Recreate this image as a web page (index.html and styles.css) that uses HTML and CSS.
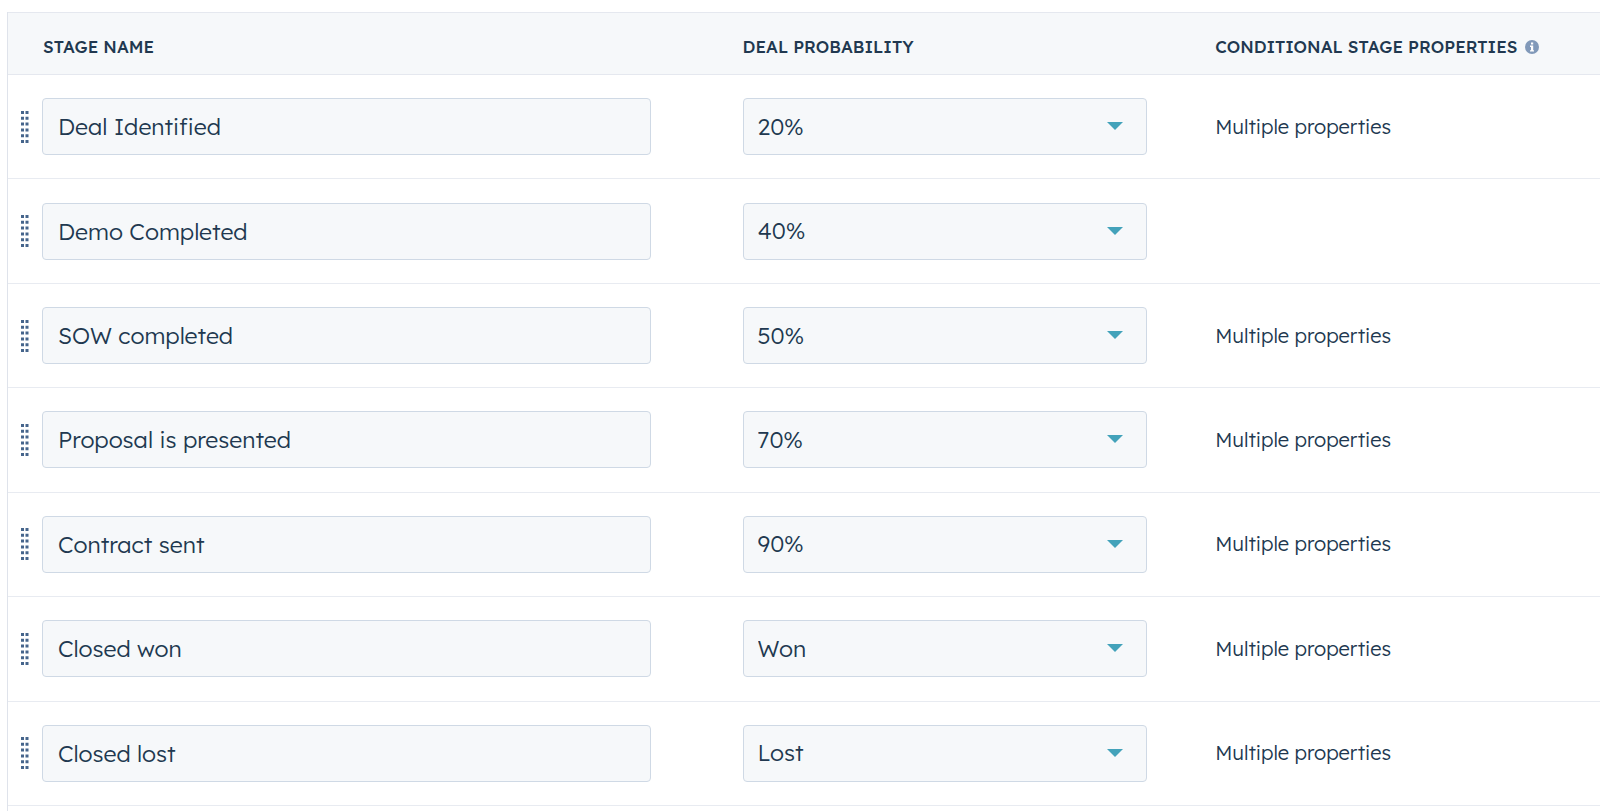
FILE: index.html
```html
<!DOCTYPE html>
<html lang="en">
<head>
<meta charset="utf-8">
<title>Deal stages</title>
<link rel="stylesheet" href="styles.css">
</head>
<body>
<svg class="sprite" aria-hidden="true">
  <symbol id="grip" viewBox="0 0 8 32">
    <path d="M0 0h3v3H0zM4.5 0h3v3h-3zM0 5.8h3v3H0zM4.5 5.8h3v3h-3zM0 11.6h3v3H0zM4.5 11.6h3v3h-3zM0 17.4h3v3H0zM4.5 17.4h3v3h-3zM0 23.2h3v3H0zM4.5 23.2h3v3h-3zM0 29h3v3H0zM4.5 29h3v3h-3z"/>
  </symbol>
  <symbol id="caret" viewBox="0 0 16 8"><path d="M0 0h16L8 8z"/></symbol>
</svg>
<main class="panel">
  <table class="stages">
    <thead>
      <tr>
        <th class="col-name" scope="col">STAGE NAME</th>
        <th class="col-prob" scope="col">DEAL PROBABILITY</th>
        <th class="col-props" scope="col">
          <span class="heading">CONDITIONAL STAGE PROPERTIES
            <svg class="info" viewBox="0 0 14 14" role="img" aria-label="Info"><circle cx="7" cy="7" r="7" fill="#8199b9"/><path fill="#fff" d="M6 2.4h2.2v2H6zM5 5.6h3.2v4.6H9v1.4H5v-1.4h1V7H5z"/></svg>
          </span>
        </th>
      </tr>
    </thead>
    <tbody>
      <tr>
        <td class="col-name"><div class="stage"><svg class="grip"><use href="#grip"/></svg><input class="field" type="text" aria-label="Stage name" value="Deal Identified"></div></td>
        <td class="col-prob"><div class="picker"><select class="field" aria-label="Deal probability"><option>20%</option></select><svg class="caret"><use href="#caret"/></svg></div></td>
        <td class="col-props">Multiple properties</td>
      </tr>
      <tr>
        <td class="col-name"><div class="stage"><svg class="grip"><use href="#grip"/></svg><input class="field" type="text" aria-label="Stage name" value="Demo Completed"></div></td>
        <td class="col-prob"><div class="picker"><select class="field" aria-label="Deal probability"><option>40%</option></select><svg class="caret"><use href="#caret"/></svg></div></td>
        <td class="col-props"></td>
      </tr>
      <tr>
        <td class="col-name"><div class="stage"><svg class="grip"><use href="#grip"/></svg><input class="field" type="text" aria-label="Stage name" value="SOW completed"></div></td>
        <td class="col-prob"><div class="picker"><select class="field" aria-label="Deal probability"><option>50%</option></select><svg class="caret"><use href="#caret"/></svg></div></td>
        <td class="col-props">Multiple properties</td>
      </tr>
      <tr>
        <td class="col-name"><div class="stage"><svg class="grip"><use href="#grip"/></svg><input class="field" type="text" aria-label="Stage name" value="Proposal is presented"></div></td>
        <td class="col-prob"><div class="picker"><select class="field" aria-label="Deal probability"><option>70%</option></select><svg class="caret"><use href="#caret"/></svg></div></td>
        <td class="col-props">Multiple properties</td>
      </tr>
      <tr>
        <td class="col-name"><div class="stage"><svg class="grip"><use href="#grip"/></svg><input class="field" type="text" aria-label="Stage name" value="Contract sent"></div></td>
        <td class="col-prob"><div class="picker"><select class="field" aria-label="Deal probability"><option>90%</option></select><svg class="caret"><use href="#caret"/></svg></div></td>
        <td class="col-props">Multiple properties</td>
      </tr>
      <tr>
        <td class="col-name"><div class="stage"><svg class="grip"><use href="#grip"/></svg><input class="field" type="text" aria-label="Stage name" value="Closed won"></div></td>
        <td class="col-prob"><div class="picker"><select class="field" aria-label="Deal probability"><option>Won</option></select><svg class="caret"><use href="#caret"/></svg></div></td>
        <td class="col-props">Multiple properties</td>
      </tr>
      <tr>
        <td class="col-name"><div class="stage"><svg class="grip"><use href="#grip"/></svg><input class="field" type="text" aria-label="Stage name" value="Closed lost"></div></td>
        <td class="col-prob"><div class="picker"><select class="field" aria-label="Deal probability"><option>Lost</option></select><svg class="caret"><use href="#caret"/></svg></div></td>
        <td class="col-props">Multiple properties</td>
      </tr>
    </tbody>
  </table>
</main>
</body>
</html>
```
FILE: styles.css
```css
* { box-sizing: border-box; }

body {
  margin: 0;
  padding: 12px 0 0 7px;
  background: #fff;
  color: #213850;
  font-family: Lexend, Inter, "Open Sans", sans-serif;
  font-weight: 300;
}

.sprite { display: none; }

.panel {
  min-height: calc(100vh - 12px);
  border-left: 1px solid #dfe3eb;
}

.stages {
  width: 100%;
  height: calc(100vh - 17px);
  border-collapse: separate;
  border-spacing: 0;
  table-layout: fixed;
}

th {
  height: 63px;
  padding-top: 8px;
  border-top: 1px solid #e5e8ef;
  border-bottom: 1px solid #e5e8ef;
  background: #f6f8fa;
  font-size: 17px;
  font-weight: 500;
  line-height: 20px;
  text-align: left;
  white-space: nowrap;
}

td {
  height: 104px;
  padding: 0;
  border-bottom: 1px solid #e8ebf1;
  font-size: 20px;
  line-height: 24px;
}

.col-name { width: 43%; padding-right: 42px; }
th.col-name { padding-left: 35px; }
td.col-name { padding-left: 13px; }
.col-prob { width: 30%; padding-left: 50px; padding-right: 23px; }
.col-props { padding-left: 45px; }

.heading {
  display: flex;
  align-items: center;
  gap: 8px;
}

.info { width: 14px; height: 14px; }

.stage {
  display: flex;
  align-items: center;
  gap: 13px;
}

.grip {
  flex: none;
  width: 8px;
  height: 32px;
  fill: #46658c;
}

.field {
  display: block;
  width: 100%;
  height: 57px;
  margin: 0;
  padding: 0 15px;
  border: 1px solid #cfd9e5;
  border-radius: 4px;
  background: #f6f8fa;
  color: inherit;
  font: inherit;
  font-size: 23px;
  appearance: none;
}

select.field { padding: 0 14px; }

.picker { position: relative; }

.caret {
  position: absolute;
  top: 24px;
  right: 24px;
  width: 16px;
  height: 8px;
  fill: #43a2ba;
  pointer-events: none;
}
```
